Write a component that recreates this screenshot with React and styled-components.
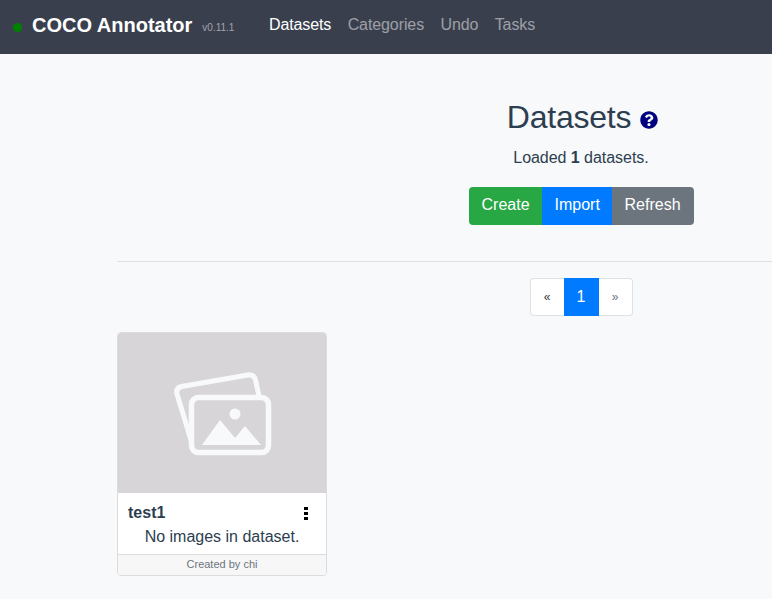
import styled, { createGlobalStyle } from 'styled-components';
import { FaQuestionCircle } from 'react-icons/fa';

const GlobalStyle = createGlobalStyle`
  html, body {
    margin: 0;
    padding: 0;
    height: 100%;
    background: #f8f9fa;
  }
  body {
    font-family: "Liberation Sans", Arial, sans-serif;
    font-size: 16px;
    line-height: 1.5;
    color: #2c3e50;
    overflow: hidden;
  }
`;

const Navbar = styled.nav`
  display: flex;
  align-items: center;
  box-sizing: border-box;
  height: 54px;
  padding: 0 0 5px 13px;
  background: #3a3f4e;
`;

const StatusDot = styled.span`
  width: 9px;
  height: 9px;
  margin-top: 5px;
  border-radius: 50%;
  background: green;
`;

const Brand = styled.span`
  margin-left: 10px;
  font-size: 20px;
  font-weight: 700;
  color: #fff;
`;

const Version = styled.span`
  margin: 6px 0 0 10px;
  font-size: 10px;
  color: #a0a3ab;
`;

const NavLinks = styled.div`
  display: flex;
  gap: 16.4px;
  margin-left: 34.5px;
  letter-spacing: -0.1px;
`;

const NavLink = styled.a`
  color: ${(p) => (p.$active ? '#fff' : 'rgba(255, 255, 255, 0.5)')};
`;

const Page = styled.main`
  width: 928px;
  margin-left: 117px;
`;

const Header = styled.header`
  display: flex;
  flex-direction: column;
  align-items: center;
  padding-top: 44px;
`;

const Title = styled.h2`
  display: flex;
  align-items: center;
  margin: 0;
  padding-left: 3px;
  font-size: 32px;
  font-weight: 500;
  line-height: 38px;
  letter-spacing: -0.25px;
  color: #2c3e50;

  svg {
    margin: 5px 0 0 9px;
    color: navy;
    font-size: 18px;
  }
`;

const Summary = styled.p`
  margin: 10px 0 0;
  line-height: 24px;
  letter-spacing: -0.04px;
`;

const ButtonGroup = styled.div`
  display: flex;
  margin-top: 17px;
  border-radius: 4px;
  overflow: hidden;
`;

const Button = styled.button`
  width: ${(p) => p.$width}px;
  height: 38px;
  padding: 0 0 2px 13px;
  border: none;
  font: inherit;
  text-align: left;
  color: #fff;
  background: ${(p) => p.$bg};
`;

const Rule = styled.hr`
  margin: 36px 0 16px;
  border: none;
  border-top: 1px solid #dfe0e2;
`;

const Pagination = styled.ul`
  display: flex;
  justify-content: center;
  margin: 0;
  padding: 0;
  list-style: none;
`;

const PageItem = styled.li`
  display: flex;
  align-items: center;
  justify-content: center;
  box-sizing: border-box;
  width: ${(p) => p.$width}px;
  height: 38px;
  border: 1px solid ${(p) => (p.$active ? '#007bff' : '#dee2e6')};
  border-left-width: ${(p) => (p.$first ? 1 : 0)}px;
  border-right-width: ${(p) => (p.$last ? 1 : 0)}px;
  border-radius: ${(p) => (p.$first ? '4px 0 0 4px' : p.$last ? '0 4px 4px 0' : '0')};
  font-size: ${(p) => (p.$active ? 16 : 12)}px;
  color: ${(p) => (p.$active ? '#fff' : p.$muted ? '#6c757d' : '#343a40')};
  background: ${(p) => (p.$active ? '#007bff' : '#fff')};
`;

const Card = styled.article`
  display: flex;
  flex-direction: column;
  box-sizing: border-box;
  width: 210px;
  height: 244px;
  margin-top: 16px;
  border: 1px solid #dcdcdf;
  border-radius: 4px;
  background: #fff;
  overflow: hidden;
`;

const Thumb = styled.div`
  display: flex;
  align-items: center;
  justify-content: center;
  height: 160px;
  background: #d7d5d8;
`;

const PhotoIcon = styled.svg`
  filter: blur(0.4px);
`;

const CardBody = styled.div`
  flex: 1;
  padding: 8px 10px 0;
`;

const CardHead = styled.div`
  display: flex;
  align-items: center;
  justify-content: space-between;
  height: 24px;
  line-height: 24px;
  font-weight: 700;
`;

const MenuDots = styled.svg`
  margin-right: 8px;
`;

const CardText = styled.p`
  margin: 0;
  line-height: 24px;
  text-align: center;
`;

const CardFooter = styled.footer`
  height: 20px;
  border-top: 1px solid #dcdcdf;
  font-size: 11px;
  line-height: 19px;
  text-align: center;
  color: #6c757d;
  background: #f7f7f7;
`;

function ImagesIcon() {
  return (
    <PhotoIcon width="100" height="86" viewBox="0 0 100 86" fill="none">
      <path
        d="M19 70 L5 24 Q3.5 18 9.5 16.5 L76 5 Q82 4 83.5 10 L87 26"
        stroke="#f8f9fa"
        strokeWidth="5"
      />
      <rect x="19.5" y="27.5" width="77" height="55" rx="7" fill="#d7d5d8" stroke="#f8f9fa" strokeWidth="5.5" />
      <circle cx="63" cy="44" r="5.5" fill="#f8f9fa" />
      <path d="M30 75 L48 50 L63 68 L73 56 L89 75 Z" fill="#f8f9fa" />
    </PhotoIcon>
  );
}

function DotsIcon() {
  return (
    <MenuDots width="4" height="13" viewBox="0 0 4 13" fill="#000">
      <rect width="4" height="3" />
      <rect y="5" width="4" height="3" />
      <rect y="10" width="4" height="3" />
    </MenuDots>
  );
}

export default function App() {
  return (
    <>
      <GlobalStyle />
      <Navbar>
        <StatusDot />
        <Brand>COCO Annotator</Brand>
        <Version>v0.11.1</Version>
        <NavLinks>
          <NavLink $active>Datasets</NavLink>
          <NavLink>Categories</NavLink>
          <NavLink>Undo</NavLink>
          <NavLink>Tasks</NavLink>
        </NavLinks>
      </Navbar>
      <Page>
        <Header>
          <Title>
            Datasets <FaQuestionCircle />
          </Title>
          <Summary>
            Loaded <b>1</b> datasets.
          </Summary>
          <ButtonGroup>
            <Button $bg="#28a745" $width={73}>Create</Button>
            <Button $bg="#007bff" $width={70}>Import</Button>
            <Button $bg="#6c757d" $width={82}>Refresh</Button>
          </ButtonGroup>
        </Header>
        <Rule />
        <Pagination>
          <PageItem $first $width={34}>«</PageItem>
          <PageItem $active $width={35}>1</PageItem>
          <PageItem $last $muted $width={34}>»</PageItem>
        </Pagination>
        <Card>
          <Thumb>
            <ImagesIcon />
          </Thumb>
          <CardBody>
            <CardHead>
              test1
              <DotsIcon />
            </CardHead>
            <CardText>No images in dataset.</CardText>
          </CardBody>
          <CardFooter>Created by chi</CardFooter>
        </Card>
      </Page>
    </>
  );
}
